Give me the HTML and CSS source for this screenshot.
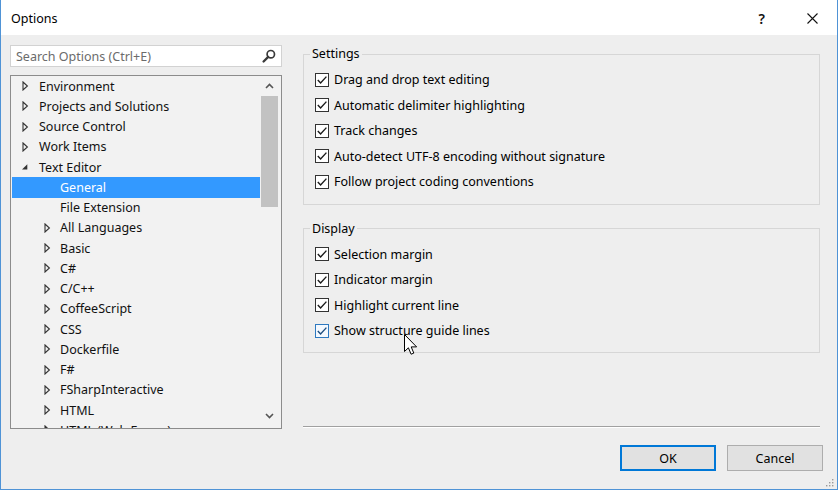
FILE: index.html
```html
<!DOCTYPE html>
<html>
<head>
<meta charset="utf-8">
<title>Options</title>
<link rel="stylesheet" href="styles.css">
</head>
<body>
<div class="window">
  <div class="titlebar">
    <span class="title">Options</span>
    <span class="help">?</span>
    <svg class="close" width="11" height="11" viewBox="0 0 11 11"><path d="M0.5 0.5 L10.5 10.5 M10.5 0.5 L0.5 10.5" stroke="#111" stroke-width="1.1" fill="none"/></svg>
  </div>

  <div class="main">
    <div class="left">
      <div class="search">
        <span class="placeholder">Search Options (Ctrl+E)</span>
        <svg class="search-icon" width="14" height="14" viewBox="0 0 14 14"><circle cx="8.8" cy="5.2" r="3.7" stroke="#3a3a3a" stroke-width="1.7" fill="none"/><path d="M6.2 7.9 L1.6 12.5" stroke="#3a3a3a" stroke-width="2.3" stroke-linecap="round"/></svg>
      </div>
      <div class="tree">
        <div class="rows">
          <div class="row l0"><span class="arrow"><svg width="10" height="10" viewBox="0 0 10 10"><polygon points="3,1 7.4,5 3,9" fill="none" stroke="#333" stroke-width="1.1"/></svg></span><span>Environment</span></div>
          <div class="row l0"><span class="arrow"><svg width="10" height="10" viewBox="0 0 10 10"><polygon points="3,1 7.4,5 3,9" fill="none" stroke="#333" stroke-width="1.1"/></svg></span><span>Projects and Solutions</span></div>
          <div class="row l0"><span class="arrow"><svg width="10" height="10" viewBox="0 0 10 10"><polygon points="3,1 7.4,5 3,9" fill="none" stroke="#333" stroke-width="1.1"/></svg></span><span>Source Control</span></div>
          <div class="row l0"><span class="arrow"><svg width="10" height="10" viewBox="0 0 10 10"><polygon points="3,1 7.4,5 3,9" fill="none" stroke="#333" stroke-width="1.1"/></svg></span><span>Work Items</span></div>
          <div class="row l0"><span class="arrow"><svg width="10" height="10" viewBox="0 0 10 10"><polygon points="7.3,2.3 7.3,7.6 2,7.6" fill="#333"/></svg></span><span>Text Editor</span></div>
          <div class="row l1 selected"><span class="arrow"></span><span>General</span></div>
          <div class="row l1"><span class="arrow"></span><span>File Extension</span></div>
          <div class="row l1"><span class="arrow"><svg width="10" height="10" viewBox="0 0 10 10"><polygon points="3,1 7.4,5 3,9" fill="none" stroke="#333" stroke-width="1.1"/></svg></span><span>All Languages</span></div>
          <div class="row l1"><span class="arrow"><svg width="10" height="10" viewBox="0 0 10 10"><polygon points="3,1 7.4,5 3,9" fill="none" stroke="#333" stroke-width="1.1"/></svg></span><span>Basic</span></div>
          <div class="row l1"><span class="arrow"><svg width="10" height="10" viewBox="0 0 10 10"><polygon points="3,1 7.4,5 3,9" fill="none" stroke="#333" stroke-width="1.1"/></svg></span><span>C#</span></div>
          <div class="row l1"><span class="arrow"><svg width="10" height="10" viewBox="0 0 10 10"><polygon points="3,1 7.4,5 3,9" fill="none" stroke="#333" stroke-width="1.1"/></svg></span><span>C/C++</span></div>
          <div class="row l1"><span class="arrow"><svg width="10" height="10" viewBox="0 0 10 10"><polygon points="3,1 7.4,5 3,9" fill="none" stroke="#333" stroke-width="1.1"/></svg></span><span>CoffeeScript</span></div>
          <div class="row l1"><span class="arrow"><svg width="10" height="10" viewBox="0 0 10 10"><polygon points="3,1 7.4,5 3,9" fill="none" stroke="#333" stroke-width="1.1"/></svg></span><span>CSS</span></div>
          <div class="row l1"><span class="arrow"><svg width="10" height="10" viewBox="0 0 10 10"><polygon points="3,1 7.4,5 3,9" fill="none" stroke="#333" stroke-width="1.1"/></svg></span><span>Dockerfile</span></div>
          <div class="row l1"><span class="arrow"><svg width="10" height="10" viewBox="0 0 10 10"><polygon points="3,1 7.4,5 3,9" fill="none" stroke="#333" stroke-width="1.1"/></svg></span><span>F#</span></div>
          <div class="row l1"><span class="arrow"><svg width="10" height="10" viewBox="0 0 10 10"><polygon points="3,1 7.4,5 3,9" fill="none" stroke="#333" stroke-width="1.1"/></svg></span><span>FSharpInteractive</span></div>
          <div class="row l1"><span class="arrow"><svg width="10" height="10" viewBox="0 0 10 10"><polygon points="3,1 7.4,5 3,9" fill="none" stroke="#333" stroke-width="1.1"/></svg></span><span>HTML</span></div>
          <div class="row l1"><span class="arrow"><svg width="10" height="10" viewBox="0 0 10 10"><polygon points="3,1 7.4,5 3,9" fill="none" stroke="#333" stroke-width="1.1"/></svg></span><span>HTML (Web Forms)</span></div>
        </div>
        <div class="scrollbar">
          <div class="sb-btn"><svg width="9" height="6" viewBox="0 0 9 6"><path d="M1 5 L4.5 1.5 L8 5" stroke="#555" stroke-width="1.6" fill="none"/></svg></div>
          <div class="sb-track"><div class="sb-thumb"></div></div>
          <div class="sb-btn down"><svg width="9" height="6" viewBox="0 0 9 6"><path d="M1 1 L4.5 4.5 L8 1" stroke="#555" stroke-width="1.6" fill="none"/></svg></div>
        </div>
      </div>
    </div>

    <div class="right">
      <fieldset class="group settings">
        <legend>Settings</legend>
        <div class="opt"><span class="cb"><svg width="12" height="12" viewBox="0 0 12 12"><path d="M1.8 6 L4.6 9 L10.4 2.6" stroke="#1a1a1a" stroke-width="1.4" fill="none"/></svg></span><span>Drag and drop text editing</span></div>
        <div class="opt"><span class="cb"><svg width="12" height="12" viewBox="0 0 12 12"><path d="M1.8 6 L4.6 9 L10.4 2.6" stroke="#1a1a1a" stroke-width="1.4" fill="none"/></svg></span><span>Automatic delimiter highlighting</span></div>
        <div class="opt"><span class="cb"><svg width="12" height="12" viewBox="0 0 12 12"><path d="M1.8 6 L4.6 9 L10.4 2.6" stroke="#1a1a1a" stroke-width="1.4" fill="none"/></svg></span><span>Track changes</span></div>
        <div class="opt"><span class="cb"><svg width="12" height="12" viewBox="0 0 12 12"><path d="M1.8 6 L4.6 9 L10.4 2.6" stroke="#1a1a1a" stroke-width="1.4" fill="none"/></svg></span><span>Auto-detect UTF-8 encoding without signature</span></div>
        <div class="opt"><span class="cb"><svg width="12" height="12" viewBox="0 0 12 12"><path d="M1.8 6 L4.6 9 L10.4 2.6" stroke="#1a1a1a" stroke-width="1.4" fill="none"/></svg></span><span>Follow project coding conventions</span></div>
      </fieldset>

      <fieldset class="group display">
        <legend>Display</legend>
        <div class="opt"><span class="cb"><svg width="12" height="12" viewBox="0 0 12 12"><path d="M1.8 6 L4.6 9 L10.4 2.6" stroke="#1a1a1a" stroke-width="1.4" fill="none"/></svg></span><span>Selection margin</span></div>
        <div class="opt"><span class="cb"><svg width="12" height="12" viewBox="0 0 12 12"><path d="M1.8 6 L4.6 9 L10.4 2.6" stroke="#1a1a1a" stroke-width="1.4" fill="none"/></svg></span><span>Indicator margin</span></div>
        <div class="opt"><span class="cb"><svg width="12" height="12" viewBox="0 0 12 12"><path d="M1.8 6 L4.6 9 L10.4 2.6" stroke="#1a1a1a" stroke-width="1.4" fill="none"/></svg></span><span>Highlight current line</span></div>
        <div class="opt"><span class="cb hover"><svg width="12" height="12" viewBox="0 0 12 12"><path d="M1.8 6 L4.6 9 L10.4 2.6" stroke="#1f4f80" stroke-width="1.4" fill="none"/></svg></span><span>Show structure guide lines</span></div>
      </fieldset>

      <div class="separator"></div>
    </div>
  </div>

  <div class="footer">
    <button class="btn primary">OK</button>
    <button class="btn">Cancel</button>
  </div>

  <svg class="grip" width="9" height="9" viewBox="0 0 9 9">
    <rect x="7" y="1" width="1.4" height="1.4" fill="#9a9a9a"/>
    <rect x="4" y="4" width="1.4" height="1.4" fill="#9a9a9a"/>
    <rect x="7" y="4" width="1.4" height="1.4" fill="#9a9a9a"/>
    <rect x="1" y="7" width="1.4" height="1.4" fill="#9a9a9a"/>
    <rect x="4" y="7" width="1.4" height="1.4" fill="#9a9a9a"/>
    <rect x="7" y="7" width="1.4" height="1.4" fill="#9a9a9a"/>
  </svg>

  <svg class="cursor" width="14" height="22" viewBox="0 0 14 22"><path d="M0.5 0.5 V17.5 L4.4 13.8 L7.1 20.2 L9.8 19.1 L7.2 12.9 H12.6 Z" fill="#fff" stroke="#000" stroke-width="1" stroke-linejoin="miter"/></svg>
</div>
</body>
</html>
```

FILE: styles.css
```css
* { box-sizing: border-box; }

html, body {
  margin: 0;
  padding: 0;
  background: #ffffff;
}

body {
  font-family: "Noto Sans", "Liberation Sans", sans-serif;
  font-size: 12.5px;
  color: #000;
}

.window {
  position: relative;
  width: 838px;
  height: 490px;
  background: #eeeeee;
  border: 1px solid #4f93d6;
  border-top: none;
  display: flex;
  flex-direction: column;
  overflow: hidden;
}

/* Title bar */
.titlebar {
  height: 35px;
  flex: none;
  background: #ffffff;
  display: flex;
  align-items: center;
  padding-left: 10px;
  padding-right: 19px;
}

.title {
  font-size: 12.5px;
  color: #000;
  padding-top: 1px;
}

.help {
  margin-left: auto;
  font-size: 14px;
  font-weight: 600;
  color: #111;
  margin-right: 42px;
  padding-top: 1px;
}

.close {
  display: block;
  margin-top: 1px;
}

/* Main area */
.main {
  flex: none;
  height: 394px;
  display: flex;
  padding: 10px 17px 0 9px;
  gap: 21px;
}

.left {
  width: 272px;
  flex: none;
  display: flex;
  flex-direction: column;
}

.search {
  height: 22px;
  background: #ffffff;
  border: 1px solid #d2d2d2;
  display: flex;
  align-items: center;
  padding-left: 5px;
  padding-right: 5px;
  padding-top: 1px;
  margin-bottom: 8px;
}

.placeholder {
  color: #6b6b6b;
  flex: 1;
}

.search-icon {
  display: block;
  margin-top: -1px;
}

.tree {
  height: 354px;
  border: 1px solid #8c8c8c;
  background: #f2f2f2;
  display: flex;
}

.rows {
  flex: 1;
  overflow: hidden;
}

.row {
  height: 20.25px;
  display: flex;
  align-items: center;
  margin: 0 1px;
  white-space: nowrap;
  color: #111;
}

.row .arrow {
  width: 10px;
  height: 10px;
  flex: none;
  display: block;
}

.row .arrow svg { display: block; }

.row.l0 { padding-left: 8px; }
.row.l0 .arrow { margin-right: 9px; }

.row.l1 { padding-left: 30px; }
.row.l1 .arrow { margin-right: 8px; }

.row.selected {
  background: #3399ff;
  color: #ffffff;
}

.scrollbar {
  width: 20px;
  flex: none;
  display: flex;
  flex-direction: column;
  padding-right: 3px;
  background: #f2f2f2;
}

.sb-btn {
  height: 20px;
  flex: none;
  display: flex;
  align-items: center;
  justify-content: center;
}

.sb-btn.down {
  margin-bottom: 2px;
}

.sb-btn svg { display: block; }

.sb-track {
  flex: 1;
}

.sb-thumb {
  height: 111px;
  background: #c2c2c2;
}

/* Right panel */
.right {
  width: 517px;
  flex: none;
  display: flex;
  flex-direction: column;
  padding-top: 1px;
}

.group {
  margin: 0;
  border: 1px solid #d6d6d6;
  min-inline-size: 0;
}

.group legend {
  padding: 0 2px;
  margin-left: -5px;
  line-height: 16px;
  color: #000;
}

.settings {
  padding: 5px 10px 9px 11px;
}

.display {
  margin-top: 16px;
  padding: 5px 10px 8px 11px;
}

.opt {
  height: 25.5px;
  display: flex;
  align-items: center;
  white-space: nowrap;
}

.cb {
  width: 14px;
  height: 14px;
  flex: none;
  border: 1px solid #333333;
  background: #ffffff;
  margin-right: 5px;
  display: flex;
  align-items: center;
  justify-content: center;
}

.cb svg { display: block; }

.cb.hover {
  border-color: #2e79c0;
  background: #f4f9ff;
}

.separator {
  margin-top: auto;
  margin-bottom: 1px;
  height: 2px;
  border-top: 1px solid #a0a0a0;
  border-bottom: 1px solid #ffffff;
}

/* Footer */
.footer {
  flex: none;
  display: flex;
  justify-content: flex-end;
  gap: 11px;
  padding: 16px 14px 0 0;
}

.btn {
  width: 96px;
  height: 26px;
  font-family: "Noto Sans", "Liberation Sans", sans-serif;
  font-size: 12.5px;
  color: #000;
  background: #e1e1e1;
  border: 1px solid #adadad;
  padding: 0;
  margin: 0;
}

.btn.primary {
  border: 2px solid #0078d7;
}

.grip {
  position: absolute;
  right: 3px;
  bottom: 2px;
}

.cursor {
  position: absolute;
  left: 403px;
  top: 334px;
}
```
